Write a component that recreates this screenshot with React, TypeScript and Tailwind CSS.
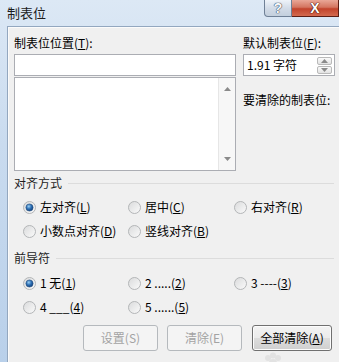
import React from "react";

function Radio({ checked }: { checked?: boolean }) {
  return (
    <svg width="13" height="13" viewBox="0 0 13 13" className="shrink-0">
      <circle cx="6.5" cy="6.5" r="6" fill="url(#radioFill)" stroke="#b3b5b7" />
      {checked && <circle cx="6.5" cy="6.5" r="3.6" fill="url(#radioDot)" stroke="#29517f" strokeWidth="0.6" />}
    </svg>
  );
}

function Option({ checked, children }: { checked?: boolean; children: React.ReactNode }) {
  return (
    <div className="flex h-[24px] items-center gap-[4px]">
      <Radio checked={checked} />
      <span className="whitespace-nowrap">{children}</span>
    </div>
  );
}

function GroupTitle({ text }: { text: string }) {
  return (
    <div className="flex h-[16px] items-center gap-[6px] text-[#1e1e1e]">
      <span className="whitespace-nowrap">{text}</span>
      <div className="h-px flex-1 bg-[#dcdcdc]" />
    </div>
  );
}

function Arrow({ up }: { up?: boolean }) {
  return (
    <svg width="7" height="4" viewBox="0 0 7 4">
      <path d={up ? "M0 4 L3.5 0 L7 4 Z" : "M0 0 L3.5 4 L7 0 Z"} fill="#8a8a8a" />
    </svg>
  );
}

export default function App() {
  return (
    <div className="relative flex h-[362px] w-[339px] flex-col overflow-hidden bg-[linear-gradient(180deg,#dce8f5_0%,#c9dbef_40%,#b9d0ea_100%)] font-['Noto_Sans_CJK_SC','Liberation_Sans',sans-serif] text-[12px] leading-[16px] text-black">
      <svg className="absolute h-0 w-0">
        <defs>
          <linearGradient id="radioFill" x1="0" y1="0" x2="1" y2="1">
            <stop offset="0" stopColor="#d9dadb" />
            <stop offset="1" stopColor="#fbfbfb" />
          </linearGradient>
          <radialGradient id="radioDot" cx="0.4" cy="0.35" r="0.7">
            <stop offset="0" stopColor="#9bd0f5" />
            <stop offset="0.5" stopColor="#2d6fb4" />
            <stop offset="1" stopColor="#0f3d78" />
          </radialGradient>
        </defs>
      </svg>

      {/* title bar */}
      <div className="flex h-[26px] shrink-0 items-start justify-between">
        <span className="pl-[7px] pt-[5px] text-[13px] leading-[16px] text-[#1b1b1b]">制表位</span>
        <div className="flex">
          <div className="flex h-[17px] w-[28px] items-center justify-center rounded-bl-[4px] border border-t-0 border-[#6f8096] bg-[linear-gradient(180deg,#eef3f9,#d3dce8_50%,#c3cfdd)] font-['Liberation_Sans',sans-serif] text-[14px] font-bold leading-none text-[#f7f9fb] [text-shadow:0_0_1px_#3c4b60,0_0_1px_#3c4b60,0_0_1px_#3c4b60]">
            ?
          </div>
          <div className="flex h-[17px] w-[47px] items-center justify-center border border-l-0 border-t-0 border-[#5b1d14] bg-[linear-gradient(180deg,#e9a797,#d47560_45%,#c2432c_55%,#d36a4f)] font-['Liberation_Sans',sans-serif] text-[14px] font-bold leading-none text-white [text-shadow:0_0_1px_#4a1208,0_0_1px_#4a1208,0_0_1px_#4a1208]">
            X
          </div>
        </div>
      </div>

      {/* dialog body */}
      <div className="ml-[7px] flex-1 border-l border-t border-[#93a7bf] bg-[#f0f0f0] pl-[6px] shadow-[inset_1px_1px_0_#fbfbfb]">
        <div className="flex pt-[8px]">
          <div className="flex w-[222px] flex-col">
            <span className="h-[16px]">
              制表位位置(<u>T</u>):
            </span>
            <div className="mt-[3px] h-[22px] border border-[#abadb3] bg-white" />
            <div className="mt-px flex h-[94px] border border-[#abadb3] bg-white">
              <div className="flex-1" />
              <div className="flex w-[17px] flex-col items-center justify-between border-l border-[#e6e6e6] bg-[#f7f7f7] py-[9px]">
                <Arrow up />
                <Arrow />
              </div>
            </div>
          </div>
          <div className="ml-[7px] flex flex-col">
            <span className="h-[16px] whitespace-nowrap">
              默认制表位(<u>F</u>):
            </span>
            <div className="mt-[3px] flex h-[22px] w-[92px] items-center justify-between border border-[#abadb3] bg-white pl-[3px] pr-[2px]">
              <span className="whitespace-nowrap">1.91 字符</span>
              <div className="flex flex-col gap-px">
                <div className="flex h-[8px] w-[15px] items-center justify-center rounded-[2px] border border-[#b9b9b9] bg-[linear-gradient(180deg,#fafafa,#e2e2e2)]">
                  <Arrow up />
                </div>
                <div className="flex h-[8px] w-[15px] items-center justify-center rounded-[2px] border border-[#b9b9b9] bg-[linear-gradient(180deg,#fafafa,#e2e2e2)]">
                  <Arrow />
                </div>
              </div>
            </div>
            <span className="mt-[16px] h-[16px] whitespace-nowrap">要清除的制表位:</span>
          </div>
        </div>

        <div className="mt-[4px] pr-[5px]">
          <GroupTitle text="对齐方式" />
        </div>
        <div className="ml-[9px] mt-[4px] grid grid-cols-[105px_106px_1fr]">
          <Option checked>
            左对齐(<u>L</u>)
          </Option>
          <Option>
            居中(<u>C</u>)
          </Option>
          <Option>
            右对齐(<u>R</u>)
          </Option>
          <Option>
            小数点对齐(<u>D</u>)
          </Option>
          <Option>
            竖线对齐(<u>B</u>)
          </Option>
        </div>

        <div className="mt-[7px] pr-[5px]">
          <GroupTitle text="前导符" />
        </div>
        <div className="ml-[9px] mt-[5px] grid grid-cols-[105px_106px_1fr]">
          <Option checked>
            1 无(<u>1</u>)
          </Option>
          <Option>
            2 .....(<u>2</u>)
          </Option>
          <Option>
            3 ----(<u>3</u>)
          </Option>
          <Option>
            4 ___(<u>4</u>)
          </Option>
          <Option>
            5 ......(<u>5</u>)
          </Option>
        </div>

        <div className="ml-[69px] mt-[6px] flex">
          <div className="flex h-[26px] w-[75px] items-center justify-center rounded-[3px] border border-[#b5b9bd] bg-[#f4f4f4] text-[#a3a3a3]">
            设置(S)
          </div>
          <div className="ml-[9px] flex h-[26px] w-[75px] items-center justify-center rounded-[3px] border border-[#b5b9bd] bg-[#f4f4f4] text-[#a3a3a3]">
            清除(E)
          </div>
          <div className="ml-[10px] flex h-[26px] w-[80px] items-center justify-center rounded-[3px] border border-[#707070] bg-[linear-gradient(180deg,#f3f3f3_0%,#ebebeb_50%,#dddddd_51%,#cfcfcf_100%)] shadow-[inset_0_0_0_1px_#fcfcfc]">
            全部清除(<u>A</u>)
          </div>
        </div>
      </div>

      {/* faint watermark */}
      <svg className="absolute left-[262px] top-[352px]" width="22" height="12" viewBox="0 0 22 12">
        <circle cx="6" cy="6" r="3" fill="#e2e2e2" />
        <circle cx="11" cy="3.5" r="3" fill="#e2e2e2" />
        <circle cx="16" cy="6" r="3" fill="#e2e2e2" />
        <circle cx="11" cy="11" r="4" fill="#e2e2e2" />
      </svg>
    </div>
  );
}
